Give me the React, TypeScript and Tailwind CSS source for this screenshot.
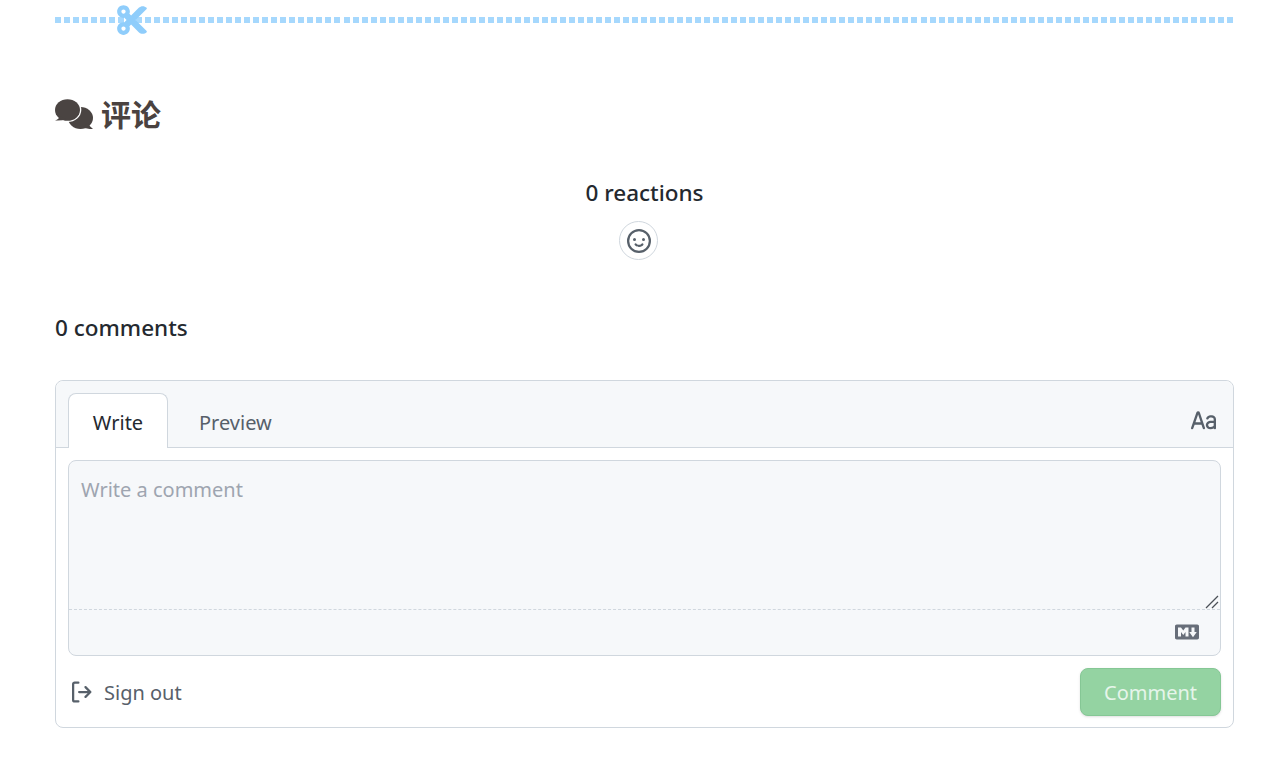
import { FaCut } from "react-icons/fa";

const font = "font-['Noto_Sans','Noto_Sans_CJK_SC',sans-serif]";

// 16px octicon paths, scaled up like the embedded widget does
const icons = {
  smiley:
    "M8 0a8 8 0 1 1 0 16A8 8 0 0 1 8 0ZM1.5 8a6.5 6.5 0 1 0 13 0 6.5 6.5 0 0 0-13 0Zm3.82 1.636a.75.75 0 0 1 1.038.175l.007.009c.103.118.22.222.35.31.264.178.683.37 1.285.37.602 0 1.02-.192 1.285-.371.13-.088.247-.192.35-.31l.007-.008a.75.75 0 0 1 1.222.87l-.022-.015c.02.013.021.015.021.015v.001l-.001.002-.002.003-.005.007-.014.019a2.066 2.066 0 0 1-.184.213c-.16.166-.338.316-.53.445-.63.418-1.37.638-2.127.629-.946 0-1.652-.308-2.126-.63a3.331 3.331 0 0 1-.715-.657l-.014-.02-.005-.006-.002-.003v-.002h-.001l.613-.432-.614.43a.75.75 0 0 1 .183-1.044ZM12 7a1 1 0 1 1-2 0 1 1 0 0 1 2 0ZM5 8a1 1 0 1 1 0-2 1 1 0 0 1 0 2Zm5.25 2.25.592.416a97.71 97.71 0 0 0-.592-.416Z",
  signOut:
    "M2 2.75C2 1.784 2.784 1 3.75 1h2.5a.75.75 0 0 1 0 1.5h-2.5a.25.25 0 0 0-.25.25v10.5c0 .138.112.25.25.25h2.5a.75.75 0 0 1 0 1.5h-2.5A1.75 1.75 0 0 1 2 13.25Zm10.44 4.5-1.97-1.97a.749.749 0 0 1 .326-1.275.749.749 0 0 1 .734.215l3.25 3.25a.75.75 0 0 1 0 1.06l-3.25 3.25a.749.749 0 0 1-1.275-.326.749.749 0 0 1 .215-.734l1.97-1.97H6.75a.75.75 0 0 1 0-1.5Z",
  typography:
    "M6.71 10H2.332l-.874 2.498a.75.75 0 0 1-1.415-.496l3.39-9.688a1.217 1.217 0 0 1 2.302.018l3.227 9.681a.75.75 0 0 1-1.423.474Zm3.13-4.358C10.53 4.374 11.87 4 13 4c1.5 0 3 .939 3 2.601v5.649a.75.75 0 0 1-1.448.275C13.995 12.82 13.3 13 12.5 13c-.77 0-1.514-.231-2.078-.709-.577-.488-.922-1.199-.922-2.041 0-.694.265-1.411.887-1.944C11 7.78 11.88 7.5 13 7.5h1.5v-.899c0-.54-.5-1.101-1.5-1.101-.869 0-1.528.282-1.84.858a.75.75 0 1 1-1.32-.716ZM6.21 8.5 4.574 3.594 2.857 8.5Zm8.29.5H13c-.881 0-1.375.22-1.637.444-.253.217-.363.5-.363.806 0 .408.155.697.39.896.249.21.63.354 1.11.354.732 0 1.26-.209 1.588-.449.35-.257.412-.495.412-.551Z",
  markdown:
    "M14.85 3c.63 0 1.15.52 1.14 1.15v7.7c0 .63-.51 1.15-1.15 1.15H1.15C.52 13 0 12.48 0 11.84V4.15C0 3.52.52 3 1.15 3ZM9 11V5H7L5.5 7 4 5H2v6h2V8l1.5 1.92L7 8v3Zm2.99.5L14.5 8H13V5h-2v3H9.5Z",
};

function Octicon({ d, size = 24, className }: { d: string; size?: number; className?: string }) {
  return (
    <svg viewBox="0 0 16 16" width={size} height={size} fill="currentColor" className={className}>
      <path d={d} />
    </svg>
  );
}

function CommentsIcon() {
  return (
    <svg viewBox="0 0 38 32" width="38" height="32" className="text-[#4a4442]">
      <ellipse cx="25.5" cy="19" rx="12.5" ry="11" fill="currentColor" />
      <path d="M33 24q1 3 5 6q-7 0-10-2z" fill="currentColor" />
      <ellipse cx="12.5" cy="11" rx="13.8" ry="12" fill="white" />
      <ellipse cx="12.5" cy="11" rx="12.5" ry="10.8" fill="currentColor" />
      <path d="M5 17q-1 3-5 4.5q7 .5 11-1.5z" fill="currentColor" />
    </svg>
  );
}

export default function App() {
  return (
    <div className={`${font} bg-white min-h-[758px] pl-[55px] pr-[37px] text-[#24292f]`}>
      {/* Cut line */}
      <div className="relative pt-[17px]">
        <div className="flex justify-between">
          {Array.from({ length: 131 }).map((_, i) => (
            <span key={i} className="h-[6px] w-[6px] bg-[#a6d8fd]" />
          ))}
        </div>
        <FaCut className="absolute left-[60px] top-[3px] text-[#8fcdfb]" size={34} />
      </div>

      {/* Heading */}
      <h2 className="mt-[72px] flex items-center gap-[8px] text-[30px] leading-[40px] font-bold text-[#4a4240]">
        <CommentsIcon />
        <span>评论</span>
      </h2>

      {/* Reactions */}
      <div className="mt-[43px] flex flex-col items-center">
        <h4 className="text-[22.5px] leading-[30px] font-medium">0 reactions</h4>
        <button className="mt-[13px] mr-[12px] flex h-[39px] w-[39px] items-center justify-center rounded-full border border-[#d0d7de] text-[#57606a]">
          <Octicon d={icons.smiley} />
        </button>
      </div>

      <h4 className="mt-[53px] text-[22.5px] leading-[30px] font-medium">0 comments</h4>

      {/* Comment box */}
      <div className="mt-[37px] rounded-[8px] border border-[#d0d7de]">
        <div className="flex h-[67px] items-end justify-between rounded-t-[8px] border-b border-[#d0d7de] bg-[#f6f8fa] pl-[12px] pr-[17px]">
          <div className="flex items-end">
            <button className="-mb-px h-[55px] w-[100px] rounded-t-[8px] border border-b-0 border-[#d0d7de] bg-white pt-[4px] text-[20px]">
              Write
            </button>
            <button className="h-[54px] px-[31px] pt-[5px] text-[20px] text-[#57606a]">Preview</button>
          </div>
          <Octicon d={icons.typography} size={25} className="mb-[13px] text-[#57606a]" />
        </div>

        <div className="px-[12px] pt-[12px]">
          <div className="relative rounded-[8px] border border-[#d0d7de] bg-[#f6f8fa]">
            <textarea
              placeholder="Write a comment"
              className="block h-[149px] w-full resize-none rounded-t-[8px] border-b border-dashed border-[#d0d7de] bg-transparent px-[12px] pt-[14px] pb-[12px] text-[20px] leading-[30px] outline-none placeholder:text-[#9ea5b0]"
            />
            {/* Resize grip */}
            <svg viewBox="0 0 14 14" className="absolute right-[1px] top-[134px] h-[14px] w-[14px] text-[#4b5057]">
              <path d="M1 13 13 1M7 13l6-6" stroke="currentColor" strokeWidth="1.3" fill="none" />
            </svg>
            <div className="flex h-[45px] items-center justify-end pr-[21px] pb-[2px]">
              <Octicon d={icons.markdown} className="text-[#676e79]" />
            </div>
          </div>
        </div>

        <div className="flex items-center justify-between px-[12px] pt-[12px] pb-[11px]">
          <button className="flex items-center gap-[11px] pl-[1px] text-[20px] text-[#57606a]">
            <Octicon d={icons.signOut} />
            <span className="pt-[2px]">Sign out</span>
          </button>
          <button className="h-[48px] w-[141px] rounded-[8px] border border-[#85c795] bg-[#94d3a2] pt-[2px] text-[20px] text-[#e6f5ea] shadow-sm">
            Comment
          </button>
        </div>
      </div>
    </div>
  );
}
